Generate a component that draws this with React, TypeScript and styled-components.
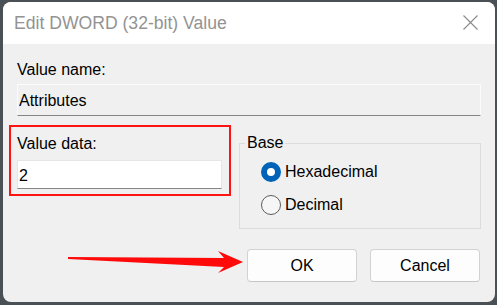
import React from "react";
import styled, { createGlobalStyle } from "styled-components";

const GlobalStyle = createGlobalStyle`
  html, body {
    margin: 0;
    padding: 0;
    background: #495056;
    font-family: "Liberation Sans", Arial, sans-serif;
  }
  * { box-sizing: border-box; }
`;

const Page = styled.div`
  width: 497px;
  height: 305px;
  padding: 2px 0 0 3px;
`;

const Window = styled.div`
  width: 492px;
  height: 300px;
  border-radius: 8px;
  overflow: hidden;
  display: flex;
  flex-direction: column;
  background: #f0f0f0;
`;

const TitleBar = styled.div`
  height: 42px;
  flex: none;
  background: #ffffff;
  display: flex;
  align-items: center;
  justify-content: space-between;
  padding: 0 17px 0 11px;
`;

const Title = styled.span`
  font-size: 17.6px;
  color: #939393;
  line-height: 20px;
`;

const CloseIcon = styled.svg`
  width: 15px;
  height: 15px;
  display: block;
  margin-top: -1px;
`;

const Body = styled.div`
  flex: 1;
  display: flex;
  flex-direction: column;
  padding: 17px 14px 0;
`;

const FieldLabel = styled.div`
  font-size: 16px;
  line-height: 18px;
  color: #000;
`;

const TextField = styled.input<{ $height: number; $top: number; $readOnlyLook?: boolean }>`
  display: block;
  width: 100%;
  height: ${(p) => p.$height}px;
  margin: ${(p) => p.$top}px 0 0;
  padding: 2px 1px 0;
  font-family: "Liberation Sans", Arial, sans-serif;
  font-size: 16px;
  color: #000;
  background: ${(p) => (p.$readOnlyLook ? "#f0f0f0" : "#ffffff")};
  border: 1px solid ${(p) => (p.$readOnlyLook ? "#fbfbfb" : "#e6e6e6")};
  border-bottom-color: #858585;
  border-radius: 0;
  outline: none;
`;

const MiddleRow = styled.div`
  display: flex;
  align-items: flex-start;
  margin-top: 9px;
`;

const Highlight = styled.div`
  width: 222px;
  flex: none;
  margin-left: -8px;
  border: 2px solid #ff1414;
  padding: 8px 7px 5px 6px;
`;

const GroupBox = styled.fieldset`
  flex: 1;
  min-width: 0;
  margin: 9px 0 0 8px;
  padding: 0;
  border: 1px solid #dcdcdc;
`;

const Legend = styled.legend`
  margin-left: 5px;
  padding: 0 2px;
  font-size: 16px;
  line-height: 18px;
  color: #000;
`;

const RadioList = styled.div`
  display: flex;
  flex-direction: column;
  gap: 13px;
  padding: 10px 0 13px 21px;
`;

const RadioRow = styled.label`
  display: flex;
  align-items: center;
  gap: 4px;
  height: 20px;
  font-size: 16px;
  line-height: 20px;
  color: #000;
`;

const RadioCircle = styled.span<{ $checked: boolean }>`
  width: 20px;
  height: 20px;
  flex: none;
  border-radius: 50%;
  background: #ffffff;
  border: ${(p) => (p.$checked ? "6px solid #0063b8" : "1px solid #5c5c5c")};
  ${(p) => (!p.$checked ? "background: #f6f6f6;" : "")}
`;

const ButtonRow = styled.div`
  position: relative;
  display: flex;
  justify-content: flex-end;
  gap: 13px;
  margin-top: 20px;
  padding-right: 1px;
`;

const Button = styled.button`
  width: 110px;
  height: 33px;
  border: 1px solid #d2d2d2;
  border-bottom-color: #c6c6c6;
  border-radius: 4px;
  background: #fdfdfd;
  font-family: "Liberation Sans", Arial, sans-serif;
  font-size: 16px;
  color: #000;
  padding: 0;
`;

const Arrow = styled.svg`
  position: absolute;
  left: 50px;
  top: 0;
  width: 180px;
  height: 28px;
`;

export default function App() {
  return (
    <>
      <GlobalStyle />
      <Page>
        <Window>
          <TitleBar>
            <Title>Edit DWORD (32-bit) Value</Title>
            <CloseIcon viewBox="0 0 15 15">
              <path d="M0.5 0.5 L14.5 14.5 M14.5 0.5 L0.5 14.5" stroke="#8a8a8a" strokeWidth="1.1" fill="none" />
            </CloseIcon>
          </TitleBar>
          <Body>
            <FieldLabel>Value name:</FieldLabel>
            <TextField $height={32} $top={5} $readOnlyLook readOnly value="Attributes" />
            <MiddleRow>
              <Highlight>
                <FieldLabel>Value data:</FieldLabel>
                <TextField $height={29} $top={7} readOnly value="2" />
              </Highlight>
              <GroupBox>
                <Legend>Base</Legend>
                <RadioList>
                  <RadioRow>
                    <RadioCircle $checked />
                    Hexadecimal
                  </RadioRow>
                  <RadioRow>
                    <RadioCircle $checked={false} />
                    Decimal
                  </RadioRow>
                </RadioList>
              </GroupBox>
            </MiddleRow>
            <ButtonRow>
              <Arrow viewBox="0 0 180 28">
                <polygon points="1,8 157,9 151,2 176,13 151,24 157,18 1,10" fill="#ff0a0a" />
              </Arrow>
              <Button>OK</Button>
              <Button>Cancel</Button>
            </ButtonRow>
          </Body>
        </Window>
      </Page>
    </>
  );
}
